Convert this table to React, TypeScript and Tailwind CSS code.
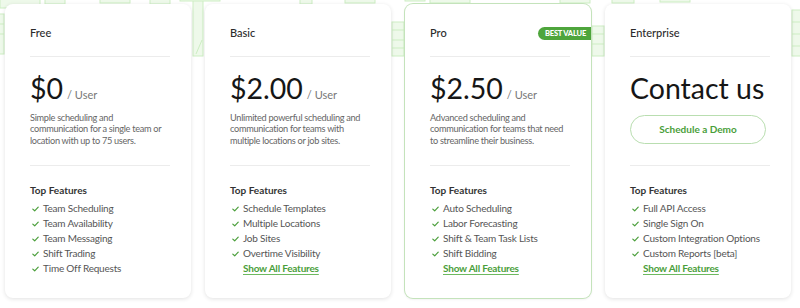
import React from 'react';

type Plan = {
  name: string;
  price?: string;
  description?: string;
  features: string[];
  showAll: boolean;
  highlight?: boolean;
};

const plans: Plan[] = [
  {
    name: 'Free',
    price: '$0',
    description: 'Simple scheduling and communication for a single team or location with up to 75 users.',
    features: ['Team Scheduling', 'Team Availability', 'Team Messaging', 'Shift Trading', 'Time Off Requests'],
    showAll: false,
  },
  {
    name: 'Basic',
    price: '$2.00',
    description: 'Unlimited powerful scheduling and communication for teams with multiple locations or job sites.',
    features: ['Schedule Templates', 'Multiple Locations', 'Job Sites', 'Overtime Visibility'],
    showAll: true,
  },
  {
    name: 'Pro',
    price: '$2.50',
    description: 'Advanced scheduling and communication for teams that need to streamline their business.',
    features: ['Auto Scheduling', 'Labor Forecasting', 'Shift & Team Task Lists', 'Shift Bidding'],
    showAll: true,
    highlight: true,
  },
  {
    name: 'Enterprise',
    features: ['Full API Access', 'Single Sign On', 'Custom Integration Options', 'Custom Reports [beta]'],
    showAll: true,
  },
];

const Check = () => (
  <svg width="7" height="6" viewBox="0 0 7 6" className="shrink-0">
    <path d="M0.8 3.1 L2.7 4.8 L6.2 1.2" fill="none" stroke="#4a9e3a" strokeWidth="1.2" strokeLinecap="round" strokeLinejoin="round" />
  </svg>
);

// faint city outline behind the cards
const Backdrop = () => (
  <svg className="absolute top-0 left-0 pointer-events-none" width="800" height="60" viewBox="0 0 800 60">
    <g fill="#eef9ea" stroke="#cdeec3" strokeWidth="1">
      <rect x="0" y="-2" width="40" height="10" />
      <rect x="45" y="-2" width="20" height="6" />
      <rect x="100" y="-2" width="30" height="5" />
      <rect x="150" y="-2" width="20" height="6" />
      <rect x="-1" y="14" width="5" height="40" />
      <path d="M0 24 L4 24 M0 34 L4 34" />
      <rect x="193" y="-2" width="10" height="58" />
      <rect x="180" y="-2" width="40" height="3" />
      <path d="M196 54 L202 40" />
      <rect x="300" y="-2" width="12" height="6" />
      <rect x="345" y="-2" width="30" height="5" />
      <rect x="392" y="22" width="12" height="34" />
      <path d="M392 30 L404 30 M392 40 L404 40 M392 48 L404 48" />
      <rect x="405" y="-2" width="20" height="3" />
      <rect x="430" y="-2" width="40" height="5" />
      <rect x="560" y="-2" width="30" height="5" />
      <rect x="592" y="26" width="12" height="30" />
      <path d="M592 34 L604 34 M592 44 L604 44" />
      <rect x="612" y="-2" width="22" height="5" />
      <rect x="660" y="-2" width="30" height="4" />
      <rect x="792" y="10" width="10" height="46" />
      <path d="M792 22 L800 22 M792 34 L800 34 M792 46 L800 46" />
    </g>
  </svg>
);

const PlanCard = ({ plan }: { plan: Plan }) => (
  <div
    className={`relative w-[186px] h-[294px] shrink-0 rounded-[8px] bg-white pl-[25px] pr-[21px] ${
      plan.highlight ? 'ring-1 ring-[#c4e3bb] shadow-[0_1px_3px_rgba(0,0,0,0.10)]' : 'shadow-[0_1px_4px_rgba(0,0,0,0.12)]'
    }`}
  >
    {plan.highlight && (
      <div className="absolute right-0 top-[23px] h-[13px] pl-[7px] pr-[5px] flex items-center rounded-l-full bg-[#4ea53c] text-white text-[7.5px] font-black uppercase tracking-[-0.2px] leading-none">
        Best Value
      </div>
    )}

    <div className="h-[52px] pt-[21px]">
      <h3 className="text-[11px] leading-[16px] text-[#2b2b2b] font-medium">{plan.name}</h3>
    </div>
    <div className="h-px bg-[#ececec]"></div>

    <div className="h-[108px] pt-[16px]">
      {plan.price ? (
        <>
          <div className="flex items-baseline gap-[4px]">
            <span className="text-[28.5px] leading-[30px] text-[#161616]">{plan.price}</span>
            <span className="text-[11px] text-[#777]">/ User</span>
          </div>
          <p className="mt-[8px] text-[9.2px] leading-[11.5px] tracking-[-0.3px] text-[#666]">{plan.description}</p>
        </>
      ) : (
        <>
          <div className="text-[28.5px] leading-[30px] text-[#161616] whitespace-nowrap">Contact us</div>
          <button className="mt-[12px] w-[136px] h-[29px] rounded-full border border-[#b9deb0] text-[#4a9e3a] text-[10px] font-bold">
            Schedule a Demo
          </button>
        </>
      )}
    </div>
    <div className="h-px bg-[#ececec]"></div>

    <div className="pt-[17px]">
      <h4 className="text-[10px] leading-[14px] font-bold text-[#333]">Top Features</h4>
      <ul className="mt-[4px]">
        {plan.features.map((f) => (
          <li key={f} className="flex items-center gap-[4px] h-[15px] pl-[2px] text-[10px] tracking-[-0.2px] text-[#555] whitespace-nowrap">
            <Check />
            <span>{f}</span>
          </li>
        ))}
      </ul>
      {plan.showAll && (
        <a className="block pl-[13px] h-[15px] leading-[15px] text-[10px] tracking-[-0.2px] font-bold text-[#4a9e3a] underline underline-offset-2 decoration-[#6db95f]">
          Show All Features
        </a>
      )}
    </div>
  </div>
);

export default function App() {
  return (
    <div className="relative w-[800px] h-[308px] overflow-hidden bg-white" style={{ fontFamily: 'Lato, "Noto Sans", sans-serif' }}>
      <Backdrop />
      <div className="relative flex gap-[14px] pl-[5px] pt-[4px]">
        {plans.map((p) => (
          <PlanCard key={p.name} plan={p} />
        ))}
      </div>
    </div>
  );
}
